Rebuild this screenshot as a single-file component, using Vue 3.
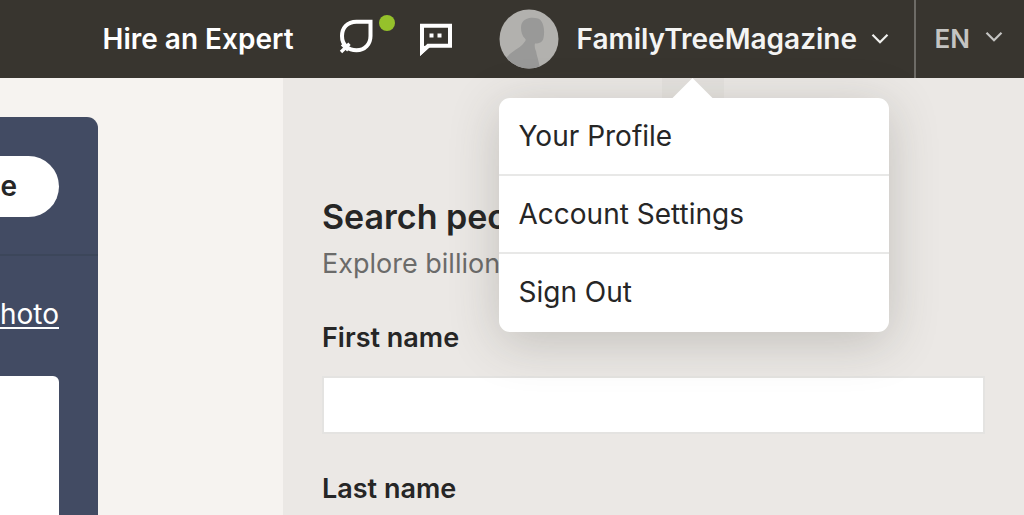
<script setup>
import { ref } from 'vue'

const firstName = ref('')
const lastName = ref('')
const menu = ['Your Profile', 'Account Settings', 'Sign Out']
</script>

<template>
  <div class="page">
    <header class="topbar">
      <a class="expert" href="#">Hire an Expert</a>
      <button class="icon-btn hints" type="button" aria-label="Hints">
        <svg width="36" height="42" viewBox="0 0 36 42" fill="none" stroke="#fff" stroke-width="4">
          <path d="M33.500 3.700H19.500C10 3.700 5 10 5 18C5 27 11.500 32.300 19.500 32.300C28 32.300 33.500 26 33.500 18Z" />
          <path d="M4 34L12.500 25.800M5 26.300L11.300 32.200" stroke-width="3.400" />
        </svg>
        <span class="dot"></span>
      </button>
      <button class="icon-btn" type="button" aria-label="Messages">
        <svg width="34" height="36" viewBox="0 0 34 36" fill="none">
          <path d="M3 4.800H31V24.800H9.200L3 30.500Z" stroke="#fff" stroke-width="4" />
          <path d="M1 24V35L11 26Z" fill="#fff" />
          <path d="M10.500 12.500h4v4h-4zM18.500 12.500h4v4h-4z" fill="#fff" />
        </svg>
      </button>
      <div class="account">
        <button class="account-btn" type="button" aria-expanded="true">
          <svg class="avatar" width="60" height="60" viewBox="0 0 60 60">
            <defs><clipPath id="disc"><circle cx="30" cy="30" r="29.500" /></clipPath></defs>
            <circle cx="30" cy="30" r="29.500" fill="#b2b1ae" />
            <path clip-path="url(#disc)" fill="#999998" d="M8 48C13 42 20 39.500 24 35C26.500 32 27.500 31 26 29.500C22 26 21 18 23 14C26 8 34 8 39 9.500C45 12 46 22 44.500 29C43.500 33 41 34.500 36 34.500C35.300 37 36 40 37 42C37.500 46 40 52 41 60H8Z" />
          </svg>
          <span class="name">FamilyTreeMagazine</span>
          <svg width="18" height="12" viewBox="0 0 18 12" fill="none" stroke="#f0f0ee" stroke-width="2.200"><path d="M1.500 1.800L9 9.300L16.500 1.800" /></svg>
        </button>
        <nav class="menu" aria-label="Account">
          <span class="arrow"></span>
          <a v-for="item in menu" :key="item" href="#">{{ item }}</a>
        </nav>
      </div>
      <button class="lang" type="button">
        <span>EN</span>
        <svg width="18" height="16" viewBox="0 0 18 16" fill="none" stroke="#c4c4c2" stroke-width="2.200"><path d="M1.500 1.800L9 9.300L16.500 1.800" /></svg>
      </button>
    </header>

    <main class="content">
      <aside class="side">
        <section class="card">
          <div class="card-head"><button class="pill" type="button">e</button></div>
          <div class="card-body">
            <a class="photo" href="#">hoto</a>
            <div class="sheet"></div>
          </div>
        </section>
      </aside>
      <form class="search" @submit.prevent>
        <h1>Search peo</h1>
        <p>Explore billion</p>
        <label for="first">First name</label>
        <input id="first" v-model="firstName" type="text" />
        <label for="last">Last name</label>
        <input id="last" v-model="lastName" type="text" />
      </form>
    </main>
  </div>
</template>

<style>
body {
  background: #f6f3f0;
}
</style>

<style scoped>
.page {
  height: 100vh;
  overflow: hidden;
  display: flex;
  flex-direction: column;
  font-family: Inter, "Liberation Sans", sans-serif;
  font-size: 28px;
  line-height: 36px;
  color: #262626;
  background: #f6f3f0;
}
* {
  box-sizing: border-box;
}
button {
  font: inherit;
  border: 0;
  padding: 0;
  background: none;
  color: inherit;
}
a {
  color: inherit;
  text-decoration: none;
}
svg {
  display: block;
  flex: none;
}
.topbar {
  display: flex;
  flex: none;
  justify-content: flex-end;
  align-items: center;
  height: 78px;
  background: #38352f;
  color: #fff;
  font-weight: 600;
  white-space: nowrap;
}
.expert {
  margin-right: 43px;
}
.icon-btn {
  position: relative;
  margin-right: 46px;
}
.dot {
  position: absolute;
  top: -3px;
  right: -22px;
  width: 16px;
  height: 16px;
  border-radius: 50%;
  background: #95c12b;
}
.account {
  position: relative;
  height: 78px;
  width: 415px;
}
.account-btn {
  display: flex;
  align-items: center;
  width: 390px;
  height: 78px;
  color: #f4f4f3;
}
.name {
  flex: 1;
  padding-left: 18px;
  text-align: left;
}
.menu {
  position: absolute;
  z-index: 2;
  top: 98px;
  left: 0;
  width: 390px;
  border-radius: 11px;
  background: #fff;
  color: #262626;
  font-weight: 400;
  box-shadow: 0 10px 50px rgba(60, 60, 50, 0.23);
}
.menu a {
  display: block;
  padding: 20px;
  border-bottom: 2px solid #e8e8e7;
}
.menu a:last-child {
  border-bottom-color: transparent;
}
.arrow {
  position: absolute;
  top: -20px;
  left: 163px;
  width: 62px;
  height: 20px;
  background: rgba(60, 55, 45, 0.03);
}
.arrow::after {
  content: "";
  display: block;
  margin: 0 auto;
  width: 42px;
  height: 21px;
  background: #fff;
  clip-path: polygon(50% 0, 100% 100%, 0 100%);
}
.lang {
  display: flex;
  align-items: center;
  gap: 15px;
  height: 78px;
  padding: 0 21px 0 19px;
  border-left: 2px solid #6d6b66;
  color: #c4c4c2;
  font-size: 26px;
}
.content {
  display: flex;
  flex: 1;
}
.side {
  display: flex;
  flex: none;
  width: 283px;
  padding-top: 39px;
}
.card {
  display: flex;
  flex-direction: column;
  width: 98px;
  border-radius: 0 11px 0 0;
  background: #424b63;
  color: #fff;
}
.card-head {
  padding: 39px 39px 37px 0;
  border-bottom: 2px solid #3c465a;
}
.pill {
  display: block;
  width: 100%;
  height: 61px;
  padding: 0 42px 2px 0;
  border-radius: 0 31px 31px 0;
  background: #fff;
  color: #262626;
  font-weight: 600;
  text-align: right;
}
.card-body {
  display: flex;
  flex: 1;
  flex-direction: column;
  padding: 40px 39px 0 0;
}
.photo {
  align-self: flex-end;
  text-decoration: underline;
  text-decoration-thickness: 2px;
  text-underline-offset: 3px;
}
.sheet {
  flex: 1;
  margin-top: 44px;
  border-radius: 0 6px 0 0;
  background: #fff;
}
.search {
  display: flex;
  flex: 1;
  flex-direction: column;
  padding: 117px 39px 0;
  background: #ebe8e5;
}
h1,
p {
  margin: 0;
  white-space: nowrap;
}
h1 {
  font-size: 34px;
  line-height: 44px;
  font-weight: 600;
}
p {
  margin: 7px 0 38px;
  color: #6b6b6a;
  font-size: 27px;
}
label {
  font-size: 27px;
  font-weight: 600;
}
input {
  flex: none;
  width: 100%;
  height: 58px;
  margin: 20px 0 37px;
  padding: 0 16px;
  border: 2px solid #e4e3e1;
  border-radius: 0;
  background: #fff;
  font: inherit;
}
</style>
